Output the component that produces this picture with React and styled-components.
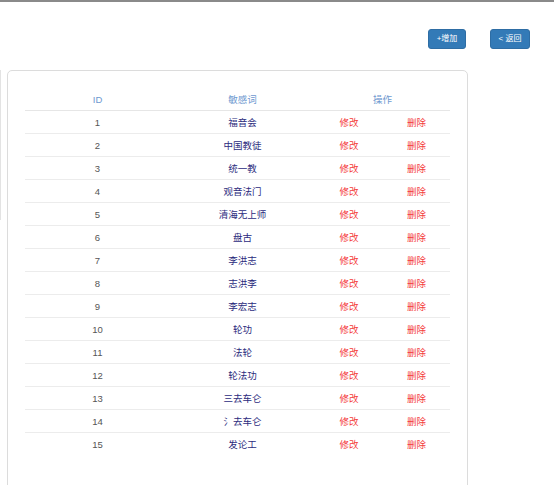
import React from "react";
import styled, { createGlobalStyle } from "styled-components";

const GlobalStyle = createGlobalStyle`
  html, body {
    margin: 0;
    padding: 0;
    background: #fff;
    font-family: "Liberation Sans", "Noto Sans CJK SC", sans-serif;
  }
`;

const Page = styled.div`
  width: 554px;
  height: 485px;
  overflow: hidden;
  border-top: 2px solid #8a8a8a;
  box-sizing: border-box;
`;

const Toolbar = styled.div`
  display: flex;
  justify-content: flex-end;
  gap: 24px;
  padding: 27px 24px 0 0;
`;

const Button = styled.button`
  width: ${(p) => p.w}px;
  height: 20px;
  padding: 0;
  border: 1px solid #2e6da4;
  border-radius: 3px;
  background: #337ab7;
  color: #fff;
  font-family: inherit;
  font-size: 8px;
  line-height: 18px;
  cursor: pointer;
`;

const Content = styled.div`
  display: flex;
  align-items: flex-start;
  margin-top: 21px;
`;

const SideStub = styled.div`
  width: 0;
  height: 150px;
  border-left: 1px solid #e3e3e3;
`;

const Card = styled.div`
  margin-left: 6px;
  width: 461px;
  height: 440px;
  box-sizing: border-box;
  border: 1px solid #dcdcdc;
  border-radius: 5px;
  padding: 17px 16px 0 17px;
`;

const Table = styled.table`
  width: 425px;
  border-collapse: collapse;
  table-layout: fixed;
  font-size: 9.5px;
`;

const Th = styled.th`
  height: 22px;
  padding: 0;
  font-weight: normal;
  color: #6d98cf;
  text-align: center;
  border-bottom: 1px solid #e6e6e6;
`;

const Td = styled.td`
  height: 22px;
  padding: 0;
  text-align: center;
  border-bottom: ${(p) => (p.last ? "none" : "1px solid #ececec")};
  color: ${(p) => p.color};
`;

const words = [
  "福音会",
  "中国教徒",
  "统一教",
  "观音法门",
  "清海无上师",
  "盘古",
  "李洪志",
  "志洪李",
  "李宏志",
  "轮功",
  "法轮",
  "轮法功",
  "三去车仑",
  "氵去车仑",
  "发论工",
];

export default function App() {
  return (
    <>
      <GlobalStyle />
      <Page>
        <Toolbar>
          <Button w={38}>+增加</Button>
          <Button w={40}>&lt; 返回</Button>
        </Toolbar>
        <Content>
          <SideStub />
          <Card>
            <Table>
              <colgroup>
                <col style={{ width: 145 }} />
                <col style={{ width: 145 }} />
                <col style={{ width: 68 }} />
                <col style={{ width: 67 }} />
              </colgroup>
              <thead>
                <tr>
                  <Th>ID</Th>
                  <Th>敏感词</Th>
                  <Th colSpan={2}>操作</Th>
                </tr>
              </thead>
              <tbody>
                {words.map((w, i) => {
                  const last = i === words.length - 1;
                  return (
                    <tr key={i}>
                      <Td last={last} color="#555">{i + 1}</Td>
                      <Td last={last} color="#2b2b7d">{w}</Td>
                      <Td last={last} color="#f43b3b">修改</Td>
                      <Td last={last} color="#f43b3b">删除</Td>
                    </tr>
                  );
                })}
              </tbody>
            </Table>
          </Card>
        </Content>
      </Page>
    </>
  );
}
